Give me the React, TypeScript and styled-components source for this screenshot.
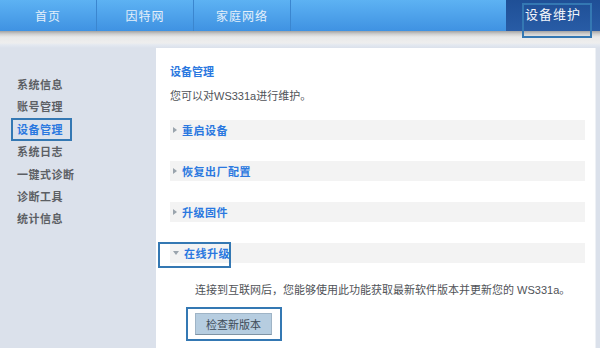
import styled, { createGlobalStyle } from 'styled-components';

const GlobalStyle = createGlobalStyle`
  html, body {
    margin: 0;
    padding: 0;
    background: #dbe1eb;
  }
  body {
    font-family: 'Liberation Sans', 'Noto Sans CJK SC', sans-serif;
  }
`;

const Page = styled.div`
  width: 600px;
  height: 348px;
  display: flex;
  flex-direction: column;
  overflow: hidden;
`;

const TopBar = styled.div`
  height: 31px;
  display: flex;
  background: linear-gradient(#5db2f3, #3f92e2);
`;

const NavItem = styled.div`
  position: relative;
  width: 97px;
  display: flex;
  align-items: center;
  justify-content: center;
  border-right: 1px solid #3b86cf;
  box-sizing: border-box;
  font-size: 12px;
  color: #e4effa;
  letter-spacing: 1px;
`;

const NavSpacer = styled.div`
  flex: 1;
`;

const NavActive = styled.div`
  position: relative;
  width: 94px;
  display: flex;
  align-items: center;
  justify-content: center;
  padding-bottom: 4px;
  box-sizing: border-box;
  background: linear-gradient(#1f4f96, #285ca6);
  font-size: 13px;
  color: #f2f5fa;
  letter-spacing: 1px;
`;

const Mark = styled.div<{ $l: number; $t: number; $r: number; $b: number }>`
  position: absolute;
  left: ${(p) => p.$l}px;
  top: ${(p) => p.$t}px;
  right: ${(p) => p.$r}px;
  bottom: ${(p) => p.$b}px;
  border: 2px solid #3478b3;
  pointer-events: none;
  z-index: 2;
`;

const Shadow = styled.div`
  height: 17px;
  background: linear-gradient(
    #a3a3a3 0px,
    #cfcfcf 3px,
    #e9e9e9 6px,
    #eeeeee 12px,
    #e3e8f0 14px,
    #dbe1eb 17px
  );
`;

const Body = styled.div`
  flex: 1;
  display: flex;
`;

const Sidebar = styled.div`
  width: 156px;
  padding-top: 25px;
  box-sizing: border-box;
  background: #dbe1eb;
`;

const SideItem = styled.div<{ $active?: boolean }>`
  height: 22.4px;
  padding-left: 17px;
  font-size: 11px;
  font-weight: bold;
  color: ${(p) => (p.$active ? '#2a78e0' : '#5c5f64')};
  letter-spacing: 0.5px;
`;

const SideLabel = styled.span`
  position: relative;
  display: inline-flex;
  align-items: center;
  height: 22px;
  vertical-align: top;
`;

const Main = styled.div`
  flex: 1;
  margin-right: 4px;
  padding: 16px 10px 0 14px;
  background: #ffffff;
  border-right: 1px solid #eef1f5;
`;

const Title = styled.div`
  height: 16px;
  line-height: 16px;
  font-size: 11px;
  font-weight: bold;
  color: #2a78e0;
`;

const Text = styled.div<{ $indent?: number; $top: number }>`
  height: 16px;
  line-height: 16px;
  margin-top: ${(p) => p.$top}px;
  padding-left: ${(p) => p.$indent ?? 0}px;
  font-size: 11px;
  color: #4f5257;
`;

const Sections = styled.div`
  margin-top: 16px;
  display: flex;
  flex-direction: column;
  gap: 21px;
`;

const SectionBar = styled.div`
  position: relative;
  height: 20px;
  display: flex;
  align-items: center;
  gap: 5px;
  padding-left: 3px;
  background: #f3f3f3;
`;

const Arrow = styled.span<{ $open?: boolean }>`
  width: 0;
  height: 0;
  ${(p) =>
    p.$open
      ? `border-left: 3px solid transparent;
         border-right: 3px solid transparent;
         border-top: 4px solid #9aa4ad;`
      : `border-top: 3px solid transparent;
         border-bottom: 3px solid transparent;
         border-left: 4px solid #9aa4ad;`}
`;

const SectionTitle = styled.span`
  font-size: 11px;
  font-weight: bold;
  color: #2a78e0;
  letter-spacing: 0.5px;
`;

const ButtonWrap = styled.div`
  position: relative;
  margin-top: 15px;
  margin-left: 25px;
  width: 77px;
`;

const Button = styled.div`
  height: 22px;
  display: flex;
  align-items: center;
  justify-content: center;
  background: #b6cde0;
  border: 1px solid #9fb4c6;
  border-bottom-color: #7f93a4;
  box-sizing: border-box;
  font-size: 11px;
  color: #3d4a57;
`;

const sideItems = ['系统信息', '账号管理', '设备管理', '系统日志', '一键式诊断', '诊断工具', '统计信息'];
const sections = ['重启设备', '恢复出厂配置', '升级固件', '在线升级'];

export default function App() {
  return (
    <Page>
      <GlobalStyle />
      <TopBar>
        <NavItem>首页</NavItem>
        <NavItem>因特网</NavItem>
        <NavItem>家庭网络</NavItem>
        <NavSpacer />
        <NavActive>
          设备维护
          <Mark $l={16} $t={3} $r={8} $b={-7} />
        </NavActive>
      </TopBar>
      <Shadow />
      <Body>
        <Sidebar>
          {sideItems.map((item) => (
            <SideItem key={item} $active={item === '设备管理'}>
              <SideLabel>
                {item}
                {item === '设备管理' && <Mark $l={-6} $t={0} $r={-9} $b={-1} />}
              </SideLabel>
            </SideItem>
          ))}
        </Sidebar>
        <Main>
          <Title>设备管理</Title>
          <Text $top={8}>您可以对WS331a进行维护。</Text>
          <Sections>
            {sections.map((s) => (
              <SectionBar key={s}>
                <Arrow $open={s === '在线升级'} />
                <SectionTitle>{s}</SectionTitle>
                {s === '在线升级' && <Mark $l={-12} $t={-1} $r={354} $b={-5} />}
              </SectionBar>
            ))}
          </Sections>
          <Text $top={19} $indent={25}>
            连接到互联网后，您能够使用此功能获取最新软件版本并更新您的 WS331a。
          </Text>
          <ButtonWrap>
            <Button>检查新版本</Button>
            <Mark $l={-9} $t={-6} $r={-10} $b={-6} />
          </ButtonWrap>
        </Main>
      </Body>
    </Page>
  );
}
